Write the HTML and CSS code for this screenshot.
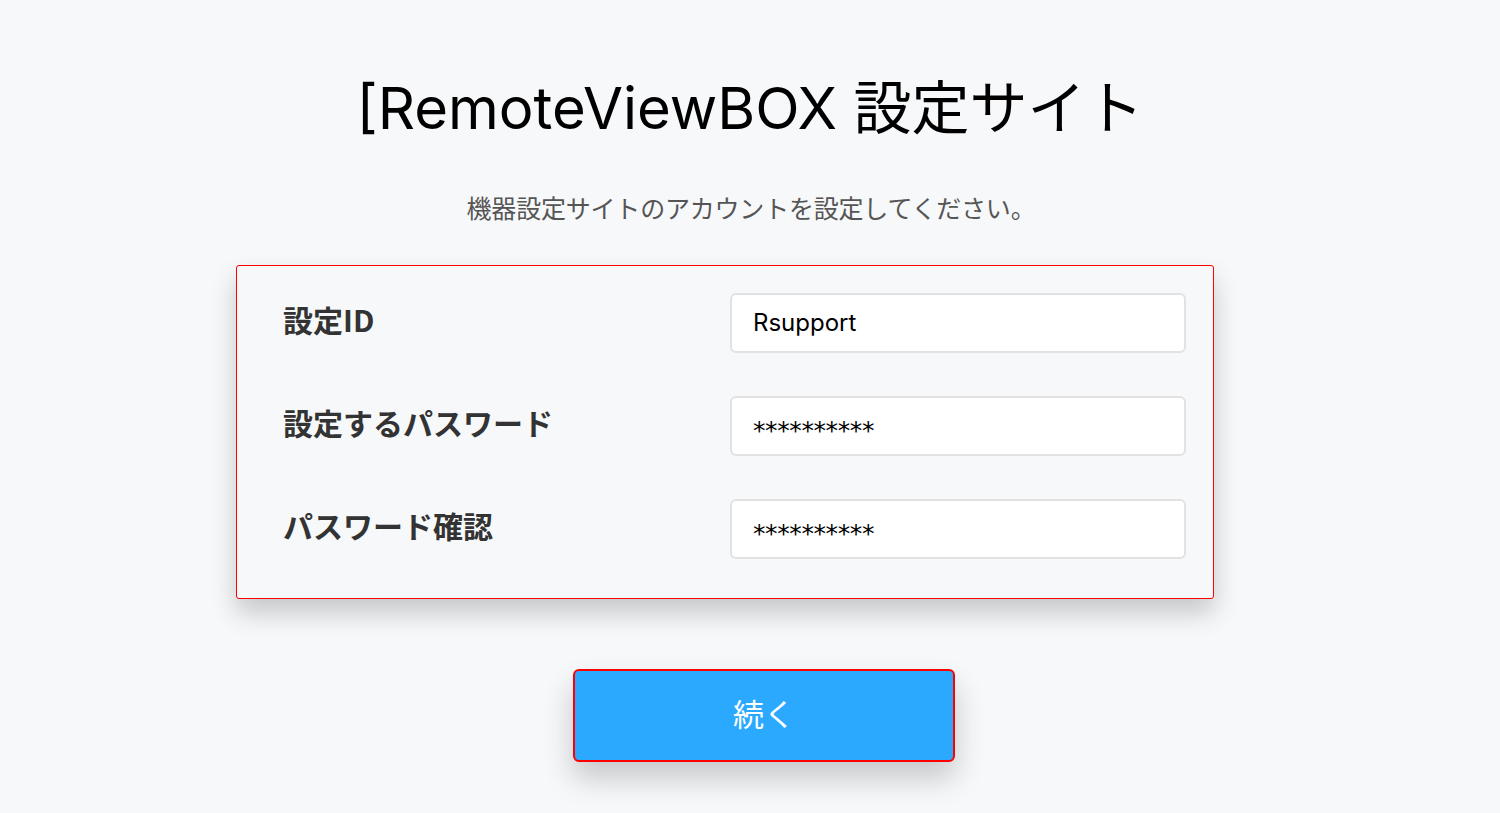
FILE: index.html
```html
<!DOCTYPE html>
<html lang="ja">
<head>
<meta charset="utf-8">
<title>RemoteViewBOX 設定サイト</title>
<link rel="stylesheet" href="styles.css">
</head>
<body>
<main class="page">
  <h1 class="title">[RemoteViewBOX 設定サイト</h1>
  <p class="subtitle">機器設定サイトのアカウントを設定してください。</p>
  <section class="card">
    <div class="row">
      <label class="label">設定ID</label>
      <div class="input"><span class="value">Rsupport</span></div>
    </div>
    <div class="row">
      <label class="label">設定するパスワード</label>
      <div class="input"><span class="mask">**********</span></div>
    </div>
    <div class="row">
      <label class="label">パスワード確認</label>
      <div class="input"><span class="mask">**********</span></div>
    </div>
  </section>
  <div class="actions">
    <button class="btn" type="button">続く</button>
  </div>
</main>
</body>
</html>
```
FILE: styles.css
```css
html, body {
  margin: 0;
  padding: 0;
  background: #f7f8fa;
  height: 100%;
}
body {
  font-family: Inter, "Noto Sans CJK JP", sans-serif;
  color: #000;
  overflow: hidden;
}
.page {
  display: flex;
  flex-direction: column;
}
.title {
  margin: 72px 0 0 0;
  text-align: center;
  font-weight: 400;
  font-size: 58px;
  line-height: 72px;
  color: #000;
  letter-spacing: 0;
}
.subtitle {
  margin: 47px 0 0 0;
  text-align: center;
  font-family: "Noto Sans CJK JP", sans-serif;
  font-size: 25px;
  line-height: 32px;
  color: #555;
  letter-spacing: -0.2px;
  padding-left: 2px;
}
.card {
  box-sizing: border-box;
  margin: 42px 0 0 236px;
  width: 978px;
  border: 1px solid #f00;
  border-radius: 3px;
  background: #f7f8fa;
  box-shadow: 0 14px 26px rgba(0, 0, 0, 0.2);
  padding: 27px 27px 39px 46px;
  display: flex;
  flex-direction: column;
  gap: 43px;
}
.row {
  display: flex;
  align-items: center;
}
.label {
  flex: 1;
  font-family: "Noto Sans CJK JP", sans-serif;
  font-weight: 700;
  font-size: 30px;
  line-height: 36px;
  color: #333;
  margin-top: -8px;
}
.input {
  box-sizing: border-box;
  width: 456px;
  height: 60px;
  background: #fff;
  border: 2px solid #e2e2e2;
  border-radius: 6px;
  padding: 0 0 0 21px;
  display: flex;
  align-items: center;
}
.value {
  font-family: Inter, sans-serif;
  font-size: 24px;
  color: #000;
  margin-top: -2px;
}
.mask {
  font-family: "DejaVu Sans", sans-serif;
  font-size: 25px;
  color: #000;
  letter-spacing: -0.4px;
  margin-top: 8px;
}
.actions {
  display: flex;
  padding-left: 573px;
  margin-top: 70px;
}
.btn {
  box-sizing: border-box;
  width: 382px;
  height: 93px;
  background: #2aa9ff;
  border: 2px solid #f00;
  border-radius: 6px;
  color: #fff;
  font-family: "Noto Sans CJK JP", sans-serif;
  font-size: 31px;
  box-shadow: 0 16px 30px rgba(0, 0, 0, 0.2);
  padding: 0 0 6px 0;
  cursor: pointer;
}
```
